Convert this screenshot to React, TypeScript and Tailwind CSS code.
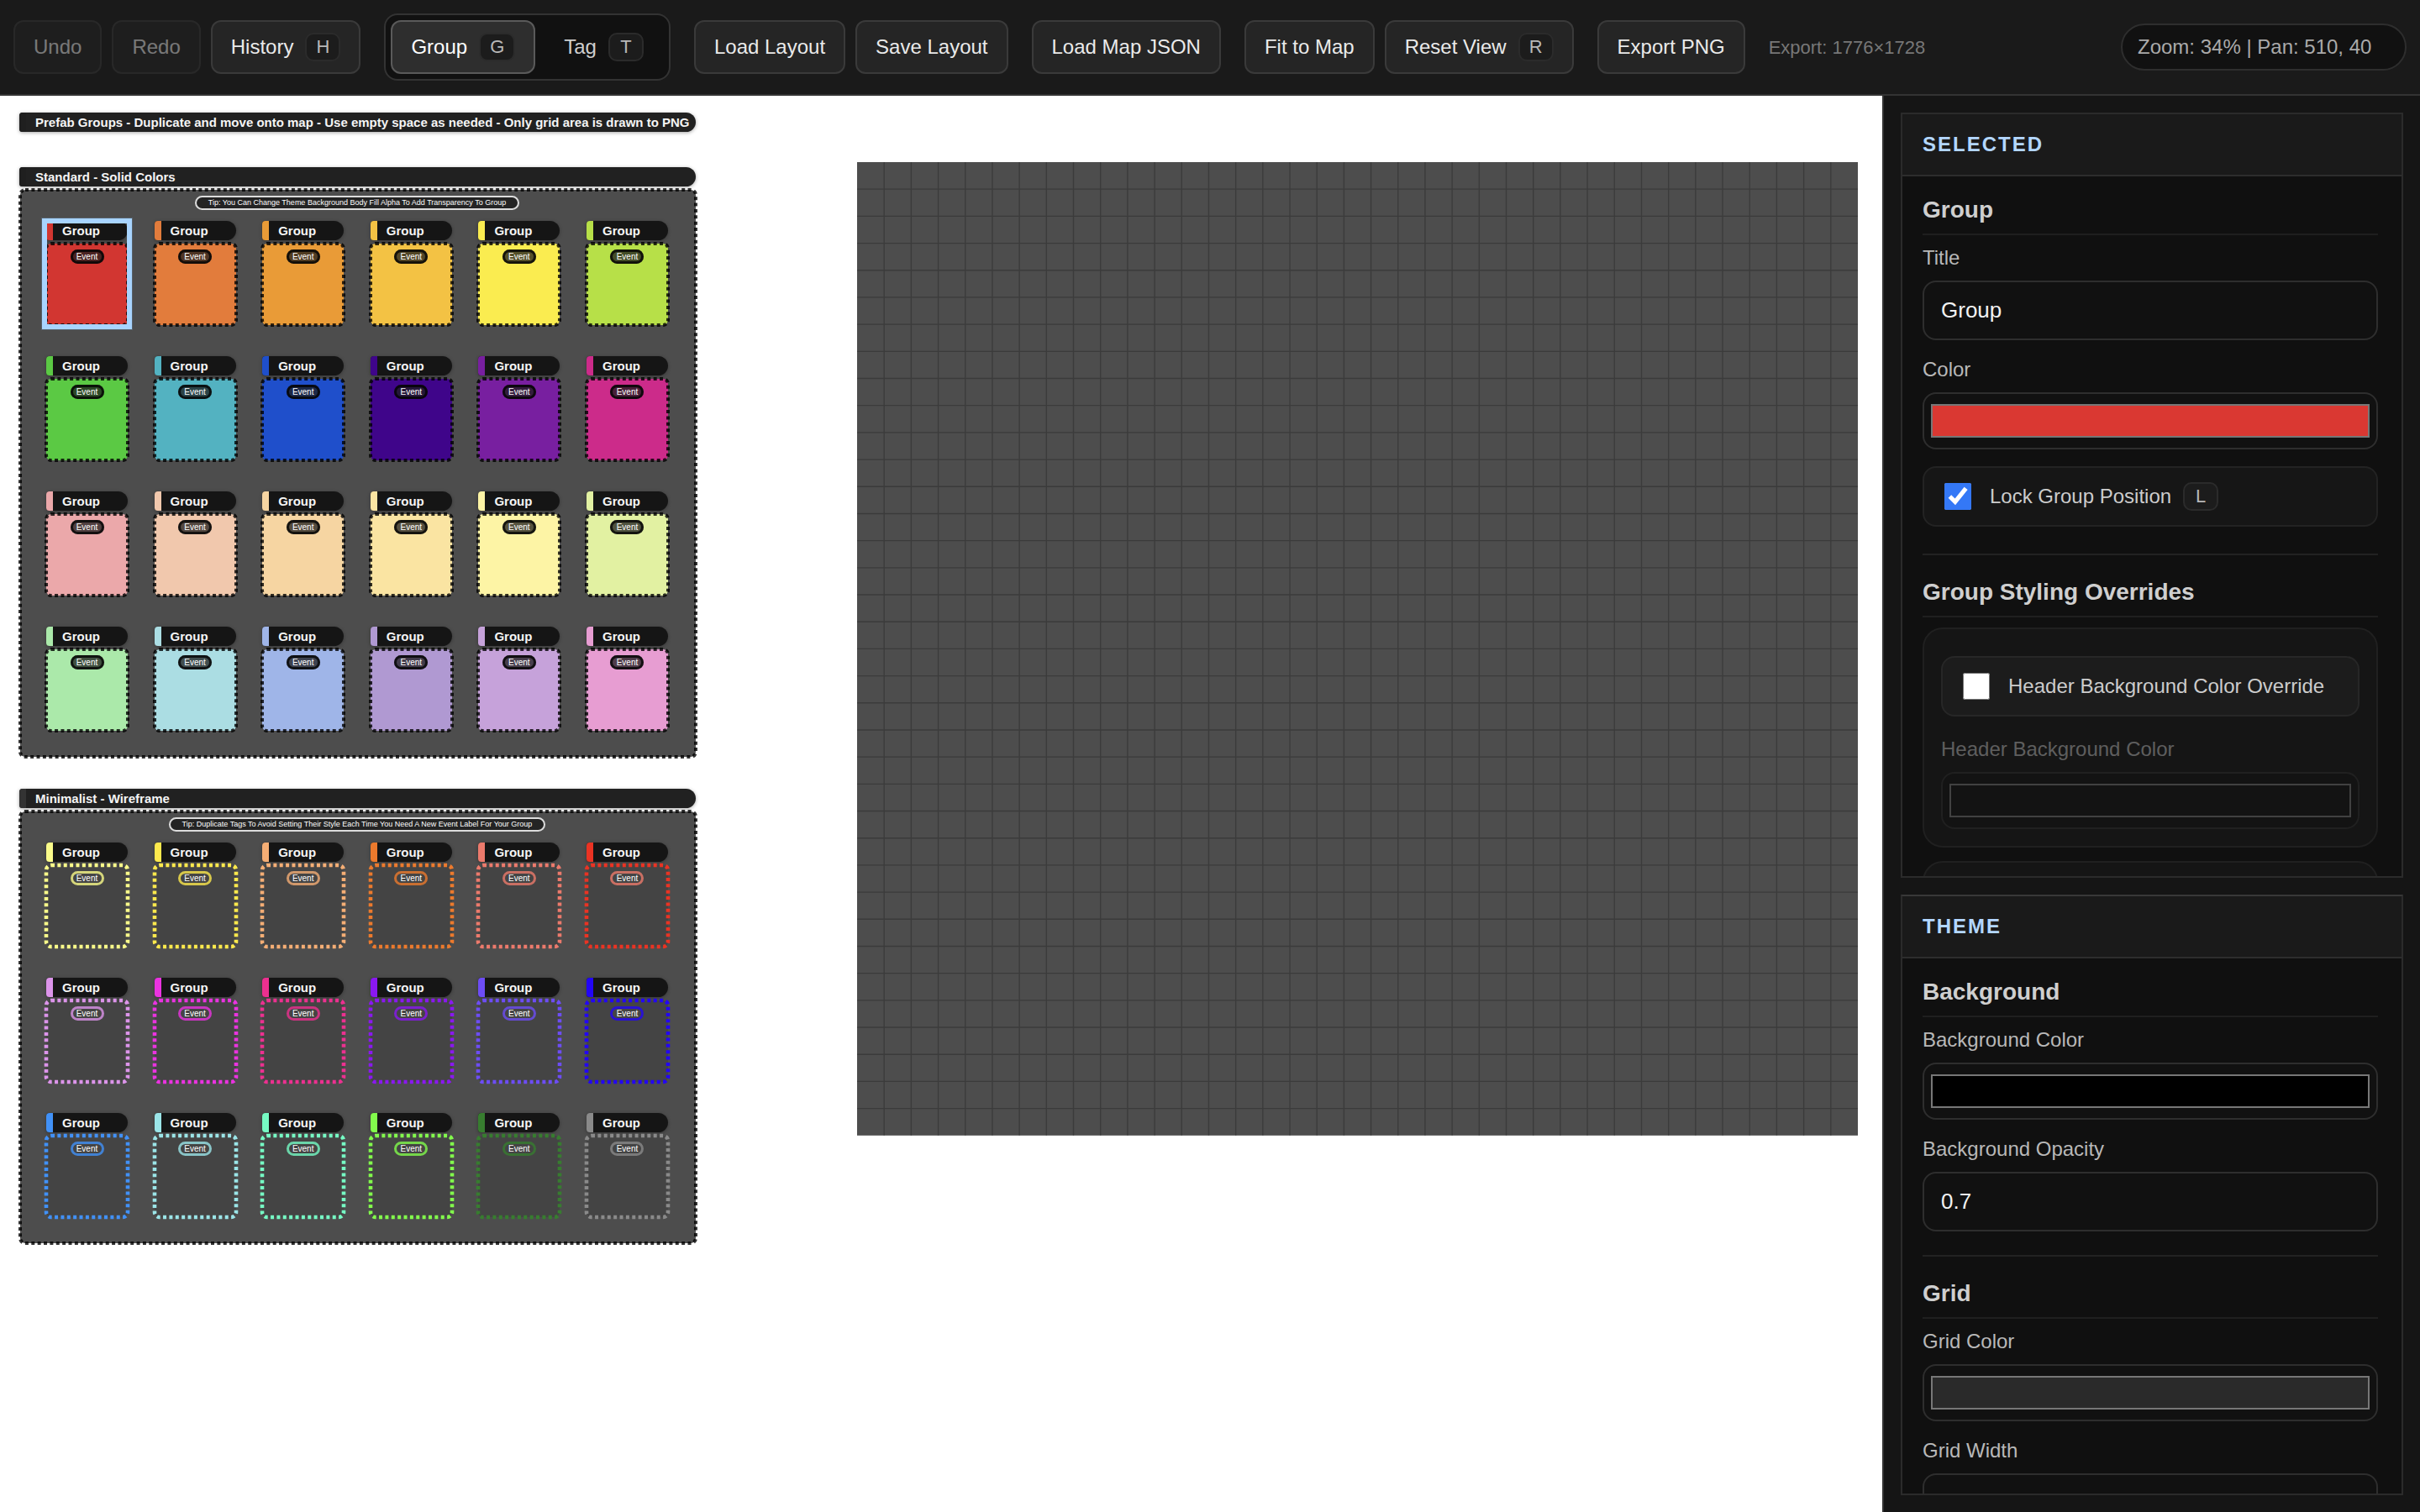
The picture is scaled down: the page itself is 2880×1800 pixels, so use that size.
import { useId, type ReactNode } from "react";

type GroupStyle = { fill: string; accent: string; tag?: string };

const solid = (color: string): GroupStyle => ({ fill: color, accent: color });
const wire = (color: string, tag?: string): GroupStyle => ({ fill: "#444444", accent: color, tag: tag ?? color });

const SOLID_GROUPS = [
  "#d23631", "#e27c3c", "#e99b37", "#f3c244", "#faec50", "#b7e048",
  "#5bc944", "#53b2c1", "#1f4fcb", "#3f058a", "#781fa0", "#cc2b8a",
  "#eba8aa", "#f1c8ad", "#f6d5a2", "#fae4a2", "#fdf4a5", "#e2f1a2",
  "#abe9aa", "#abdde3", "#9fb5e8", "#b099d2", "#c6a2da", "#e79dd2",
].map(solid);

const WIRE_GROUPS = [
  wire("#fafb8a"), wire("#fde94d"), wire("#f5ae75"), wire("#ec7a2d"), wire("#ec7a6c"), wire("#ea3323", "#ec7a6c"),
  wire("#dc94ea"), wire("#ea33e0"), wire("#ec3090"), wire("#8a18f0"), wire("#6d4df5"), wire("#2306f5"),
  wire("#4191f7"), wire("#9be5e8"), wire("#76fbc4"), wire("#82fb4c"), wire("#377d2f"), wire("#8a8a8a"),
];

function Kbd({ children }: { children: ReactNode }) {
  return (
    <kbd className="inline-flex h-[34px] min-w-[42px] items-center justify-center rounded-[10px] border-2 border-[#2b2b2b] bg-[#1c1c1c] px-[11px] font-['Liberation_Sans',Arial,sans-serif] text-[22px] leading-none font-normal text-[#b8b8b8]">
      {children}
    </kbd>
  );
}

function ToolButton({ children, hotkey, disabled }: { children: ReactNode; hotkey?: string; disabled?: boolean }) {
  return (
    <button
      type="button"
      disabled={disabled}
      className="flex h-16 items-center gap-[14px] rounded-xl border-2 border-[#3a3a3a] bg-[#252525] px-[22px] text-2xl whitespace-nowrap text-[#eaeaea] disabled:opacity-45"
    >
      {children}
      {hotkey && <Kbd>{hotkey}</Kbd>}
    </button>
  );
}

function Toolbar() {
  return (
    <header className="flex h-[114px] shrink-0 items-center gap-7 border-b-2 border-[#333333] bg-[#1a1a1a] px-4">
      <div className="flex gap-3">
        <ToolButton disabled>Undo</ToolButton>
        <ToolButton disabled>Redo</ToolButton>
        <ToolButton hotkey="H">History</ToolButton>
      </div>
      <div className="flex gap-[10px] rounded-2xl border-2 border-[#333333] bg-[#111111] p-[6px]">
        <button
          type="button"
          aria-pressed="true"
          className="flex h-16 items-center gap-[14px] rounded-xl border-2 border-[#5a5a5a] bg-[#2e2e2e] px-[22px] text-2xl text-white"
        >
          Group
          <Kbd>G</Kbd>
        </button>
        <button
          type="button"
          aria-pressed="false"
          className="flex h-16 items-center gap-[14px] rounded-xl border-2 border-transparent px-[22px] text-2xl text-[#cfcfcf]"
        >
          Tag
          <Kbd>T</Kbd>
        </button>
      </div>
      <div className="flex gap-3">
        <ToolButton>Load Layout</ToolButton>
        <ToolButton>Save Layout</ToolButton>
      </div>
      <ToolButton>Load Map JSON</ToolButton>
      <div className="flex gap-3">
        <ToolButton>Fit to Map</ToolButton>
        <ToolButton hotkey="R">Reset View</ToolButton>
      </div>
      <ToolButton>Export PNG</ToolButton>
      <span className="text-[22px] whitespace-nowrap text-[#777777]">Export: 1776×1728</span>
      <div className="ml-auto flex h-14 min-w-[340px] items-center rounded-full border-2 border-[#2e2e2e] bg-[#111111] px-[18px] text-2xl whitespace-nowrap text-[#aaaaaa]">
        Zoom: 34% | Pan: 510, 40
      </div>
    </header>
  );
}

function DashedFrame({ fill, stroke, wide }: { fill: string; stroke: string; wide?: boolean }) {
  return (
    <svg className="absolute inset-0 h-full w-full overflow-visible" aria-hidden="true">
      <rect
        width="100%"
        height="100%"
        rx="6"
        fill={fill}
        stroke={stroke}
        strokeWidth={wide ? 4.6 : 4}
        strokeDasharray="4 3.37"
      />
    </svg>
  );
}

function TitleBar({ children, strip }: { children: ReactNode; strip: string }) {
  return (
    <div className="-ml-px flex h-[23px] items-center overflow-hidden rounded-l-[4px] rounded-r-[12px] bg-[#212121] text-[15px] leading-6 font-bold whitespace-nowrap text-[#f5f5f5] shadow-[0_1px_4px_rgba(0,0,0,0.35)]">
      <span className={"mr-[11px] h-full w-2 shrink-0 " + strip} />
      {children}
    </div>
  );
}

function GroupCard({ group, selected }: { group: GroupStyle; selected?: boolean }) {
  const wireframe = group.tag !== undefined;
  return (
    <div className="relative flex w-[97px] flex-col gap-1">
      <div className="flex h-[23px] overflow-hidden rounded-l-[4px] rounded-r-[12px] bg-[#151515] text-[15px] leading-6 font-bold text-[#f5f5f5] shadow-[0_1px_4px_rgba(0,0,0,0.3)]">
        <span className="mr-[11px] h-full w-2" style={{ backgroundColor: group.accent }} />
        Group
      </div>
      <div className="relative flex h-[97px] justify-center pt-[7px]">
        <DashedFrame fill={group.fill} stroke={wireframe ? group.accent : "rgba(0,0,0,0.8)"} wide={wireframe} />
        <span
          className={
            "relative flex h-[17px] w-10 items-center justify-center rounded-full text-[10px] leading-none text-white " +
            (wireframe ? "" : "bg-[#1e1e1e]/75")
          }
        >
          <span
            className={"absolute inset-0 rounded-full border-3 " + (wireframe ? "opacity-80" : "opacity-75")}
            style={{ borderColor: group.tag ?? "#000000" }}
          />
          <span className="relative">Event</span>
        </span>
      </div>
      {selected && (
        <div className="absolute -inset-x-[5px] -top-[3px] -bottom-[5px] border-6 border-[#a8d4ff] outline outline-[#5f6f80]/60" />
      )}
    </div>
  );
}

function PrefabSection({
  title,
  tip,
  strip,
  groups,
  selectedIndex,
}: {
  title: string;
  tip: string;
  strip: string;
  groups: GroupStyle[];
  selectedIndex?: number;
}) {
  return (
    <section className="flex flex-col gap-1">
      <TitleBar strip={strip}>{title}</TitleBar>
      <div className="relative flex flex-col items-center gap-[13px] pt-[7px] pr-[33px] pb-[31px] pl-[31px]">
        <DashedFrame fill="#4d4d4d" stroke="rgba(0,0,0,0.8)" />
        <div className="relative flex h-[17px] items-center rounded-full border-2 border-[#dcdcdc] bg-[#242424] px-[14px] text-[9px] leading-none whitespace-nowrap text-white">
          {tip}
        </div>
        <div className="relative grid w-full grid-cols-[repeat(6,97px)] justify-between gap-y-[37px]">
          {groups.map((group, i) => (
            <GroupCard key={i} group={group} selected={i === selectedIndex} />
          ))}
        </div>
      </div>
    </section>
  );
}

const COLUMNS = 37;
const ROWS = 36;
const CELL = 48;

function MapGrid() {
  const verticals = Array.from({ length: COLUMNS - 1 }, (_, i) => `M${(i + 1) * CELL} 0V${ROWS * CELL}`);
  const horizontals = Array.from({ length: ROWS - 1 }, (_, i) => `M0 ${(i + 1) * CELL}H${COLUMNS * CELL}`);
  return (
    <svg
      viewBox={`0 0 ${COLUMNS * CELL} ${ROWS * CELL}`}
      className="mt-[79px] ml-[192px] w-[1191px] shrink-0"
      role="img"
      aria-label="Map grid"
    >
      <rect width="100%" height="100%" fill="#4d4d4d" />
      <path d={[...verticals, ...horizontals].join("")} stroke="#2a2a2a" strokeOpacity="0.5" strokeWidth="2" fill="none" />
    </svg>
  );
}

function Panel({ title, grow, children }: { title: string; grow: string; children: ReactNode }) {
  return (
    <section className={"flex min-h-0 basis-0 flex-col border-2 border-[#2b2b2b] bg-[#101010] " + grow}>
      <h2 className="flex h-[74px] shrink-0 items-center border-b-2 border-[#2d2d2d] bg-[#1a1a1a] px-6 text-2xl font-bold tracking-[2px] text-[#b3d7ff]">
        {title}
      </h2>
      <div className="min-h-0 flex-1 overflow-hidden pr-7 pl-6">{children}</div>
    </section>
  );
}

function SectionHeading({ children, first }: { children: ReactNode; first?: boolean }) {
  return (
    <h3
      className={
        "border-b-2 border-[#1f1f1f] pb-3 text-[28px] leading-8 font-bold text-[#cfcfcf] " + (first ? "pt-6" : "pt-7")
      }
    >
      {children}
    </h3>
  );
}

function TextField({ label, value, first }: { label: string; value: string; first?: boolean }) {
  const id = useId();
  return (
    <div className={first ? "mt-3" : "mt-5"}>
      <label htmlFor={id} className="block text-2xl leading-[30px] text-[#b8b8b8]">
        {label}
      </label>
      <input
        id={id}
        type="text"
        defaultValue={value}
        className="mt-3 block h-[71px] w-full rounded-2xl border-2 border-[#2e2e2e] bg-[#111111] px-5 text-[26px] text-[#f2f2f2]"
      />
    </div>
  );
}

function ColorField({
  label,
  value,
  first,
  disabled,
}: {
  label: string;
  value: string;
  first?: boolean;
  disabled?: boolean;
}) {
  const id = useId();
  return (
    <div className={(first ? "mt-3" : "mt-5") + (disabled ? " opacity-45" : "")}>
      <label htmlFor={id} className="block text-2xl leading-[30px] text-[#b8b8b8]">
        {label}
      </label>
      <input
        id={id}
        type="color"
        defaultValue={value}
        disabled={disabled}
        className="mt-3 block h-[68px] w-full appearance-none rounded-2xl border-2 border-[#2e2e2e] bg-[#111111] px-2 py-3 [&::-webkit-color-swatch]:rounded-none [&::-webkit-color-swatch]:border-2 [&::-webkit-color-swatch]:border-[#777777] [&::-webkit-color-swatch-wrapper]:p-0"
      />
    </div>
  );
}

function CheckRow({
  label,
  checked,
  hotkey,
  className,
}: {
  label: string;
  checked?: boolean;
  hotkey?: string;
  className: string;
}) {
  return (
    <label className={"flex h-[72px] items-center rounded-2xl border-2 px-6 text-2xl text-[#cccccc] " + className}>
      <input type="checkbox" defaultChecked={checked} className="mr-[22px] size-8 accent-[#3478f6]" />
      <span className="mr-[14px]">{label}</span>
      {hotkey && <Kbd>{hotkey}</Kbd>}
    </label>
  );
}

function Rule({ tall }: { tall?: boolean }) {
  return <hr className={"border-t-2 border-[#222222] " + (tall ? "mt-8" : "mt-7")} />;
}

function Sidebar() {
  return (
    <aside className="flex w-[640px] shrink-0 flex-col gap-5 border-l-2 border-[#333333] bg-[#151515] p-5">
      <Panel title="SELECTED" grow="grow-51">
        <SectionHeading first>Group</SectionHeading>
        <TextField label="Title" value="Group" first />
        <ColorField label="Color" value="#da3832" />
        <CheckRow label="Lock Group Position" checked hotkey="L" className="mt-5 border-[#232323] bg-[#161616]" />
        <Rule tall />
        <SectionHeading>Group Styling Overrides</SectionHeading>
        <div className="mt-3 rounded-3xl border-2 border-[#202020] bg-[#151515] px-5 pt-8 pb-5">
          <CheckRow label="Header Background Color Override" className="mb-6 border-[#272727] bg-[#1c1c1c]" />
          <ColorField label="Header Background Color" value="#111111" disabled />
        </div>
        <div className="mt-4 h-40 rounded-3xl border-2 border-[#202020] bg-[#151515]" />
      </Panel>
      <Panel title="THEME" grow="grow-40 border-t-[#383838]">
        <SectionHeading first>Background</SectionHeading>
        <ColorField label="Background Color" value="#000000" first />
        <TextField label="Background Opacity" value="0.7" />
        <Rule />
        <SectionHeading>Grid</SectionHeading>
        <ColorField label="Grid Color" value="#2a2a2a" first />
        <TextField label="Grid Width" value="" />
      </Panel>
    </aside>
  );
}

export default function App() {
  return (
    <div className="flex h-screen flex-col overflow-hidden bg-white font-['Liberation_Sans',Arial,sans-serif]">
      <Toolbar />
      <div className="flex min-h-0 flex-1">
        <main className="flex min-w-0 flex-1 items-start overflow-hidden">
          <div className="mt-5 ml-6 flex w-[804px] shrink-0 flex-col">
            <TitleBar strip="bg-[#1f1f1f]">
              Prefab Groups - Duplicate and move onto map - Use empty space as needed - Only grid area is drawn to PNG
            </TitleBar>
            <div className="mt-[42px] flex flex-col gap-[38px]">
              <PrefabSection
                title="Standard - Solid Colors"
                tip="Tip: You Can Change Theme Background Body Fill Alpha To Add Transparency To Group"
                strip="bg-[#1f1f1f]"
                groups={SOLID_GROUPS}
                selectedIndex={0}
              />
              <PrefabSection
                title="Minimalist - Wireframe"
                tip="Tip: Duplicate Tags To Avoid Setting Their Style Each Time You Need A New Event Label For Your Group"
                strip="bg-[#333333]"
                groups={WIRE_GROUPS}
              />
            </div>
          </div>
          <MapGrid />
        </main>
        <Sidebar />
      </div>
    </div>
  );
}
